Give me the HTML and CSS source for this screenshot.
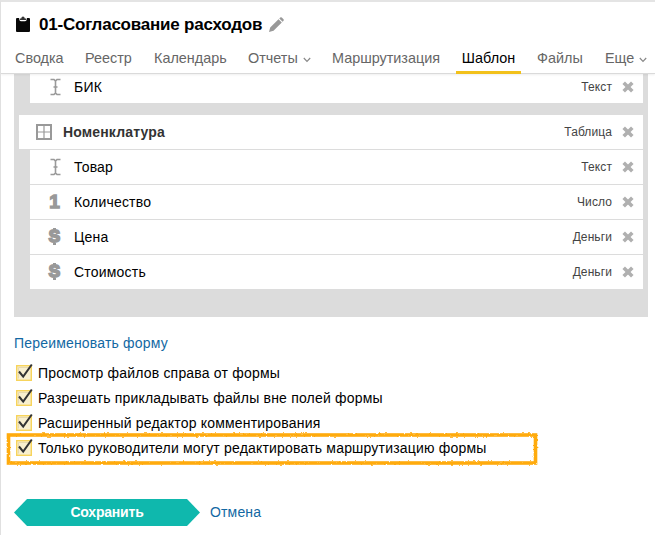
FILE: index.html
```html
<!DOCTYPE html>
<html lang="ru">
<head>
<meta charset="utf-8">
<title>01-Согласование расходов</title>
<link rel="stylesheet" href="styles.css">
</head>
<body>
<svg class="defs" width="0" height="0">
  <symbol id="cursor" viewBox="0 0 11 18"><path d="M.5 1.500H4L5.500 3 7 1.500h3.500M.5 16.500H4L5.500 15 7 16.500h3.500M5.500 3v12M3.500 9h4" fill="none" stroke="#999" stroke-width="1.600"/></symbol>
  <symbol id="cross" viewBox="0 0 12 12"><path d="M1.700 1.700l8.600 8.600M10.300 1.700l-8.600 8.600" fill="none" stroke="#b0b0b0" stroke-width="3.600"/></symbol>
  <symbol id="check" viewBox="0 0 18 18"><rect x=".7" y="2.700" width="14.600" height="14.600" fill="#f8efcf" stroke="#f7d45c" stroke-width="1.400"/><path d="M2.500 15.500v-11h11" fill="none" stroke="#e6d9b0"/><path d="M3 8.500l4.200 5.200L15.800 1.500" fill="none" stroke="#333" stroke-width="2"/></symbol>
  <symbol id="chevron" viewBox="0 0 8 6"><path d="M.8 1L4 4.300 7.200 1" fill="none" stroke="#888" stroke-width="1.200"/></symbol>
</svg>
<div class="page">
  <header class="header">
    <div class="title-row">
      <svg class="clipboard" viewBox="0 0 14 16"><path d="M1 2h2q.2 3.200 2 3.200h4q1.800 0 2-3.200h2q1 0 1 1v12q0 1-1 1H1q-1 0-1-1V3q0-1 1-1z" fill="#080808"/><path d="M3.700 4V2.500h1.500Q5.500.5 7 .5t1.800 2h1.500V4z" fill="#333"/></svg>
      <h1 class="title">01-Согласование расходов</h1>
      <svg class="pencil" viewBox="0 0 15 15"><path d="M0 15l1.200-4.500L9.500 2.200l3.300 3.300-8.300 8.300zM10.300 1.400L11.200.5q.8-.7 1.600 0l1.700 1.700q.8.800 0 1.600l-.9.900z" fill="#999"/></svg>
    </div>
    <nav class="nav">
      <a class="tab t1">Сводка</a><a class="tab t2">Реестр</a><a class="tab t3">Календарь</a><a class="tab t4">Отчеты<svg class="chev"><use href="#chevron"/></svg></a><a class="tab t5">Маршрутизация</a><a class="tab t6 active">Шаблон</a><a class="tab t7">Файлы</a><a class="tab t8">Еще<svg class="chev"><use href="#chevron"/></svg></a>
    </nav>
  </header>
  <main class="main">
    <section class="panel">
      <div class="row cut"><svg class="ic-cursor"><use href="#cursor"/></svg><span class="name">БИК</span><span class="type">Текст</span><svg class="cross"><use href="#cross"/></svg></div>
      <div class="row table"><svg class="ic-table" viewBox="0 0 16 16"><path d="M1 1h14v14H1z" fill="none" stroke="#999" stroke-width="2"/><path d="M8 1v14M1 8h14" stroke="#999" stroke-width="1.200"/></svg><span class="name">Номенклатура</span><span class="type">Таблица</span><svg class="cross"><use href="#cross"/></svg></div>
      <div class="row"><svg class="ic-cursor"><use href="#cursor"/></svg><span class="name">Товар</span><span class="type">Текст</span><svg class="cross"><use href="#cross"/></svg></div>
      <div class="row"><span class="glyph">1</span><span class="name">Количество</span><span class="type">Число</span><svg class="cross"><use href="#cross"/></svg></div>
      <div class="row"><span class="glyph money">S</span><span class="name">Цена</span><span class="type">Деньги</span><svg class="cross"><use href="#cross"/></svg></div>
      <div class="row last"><span class="glyph money">S</span><span class="name">Стоимость</span><span class="type">Деньги</span><svg class="cross"><use href="#cross"/></svg></div>
    </section>
    <a class="rename">Переименовать форму</a>
    <div class="options">
      <label class="option"><svg class="check"><use href="#check"/></svg><span>Просмотр файлов справа от формы</span></label>
      <label class="option"><svg class="check"><use href="#check"/></svg><span>Разрешать прикладывать файлы вне полей формы</span></label>
      <label class="option"><svg class="check"><use href="#check"/></svg><span>Расширенный редактор комментирования</span></label>
      <label class="option"><svg class="check"><use href="#check"/></svg><span>Только руководители могут редактировать маршрутизацию формы</span>
        <svg class="marker" viewBox="0 0 532 34"><filter id="rough" x="-5%" y="-20%" width="110%" height="140%"><feTurbulence type="fractalNoise" baseFrequency=".4" numOctaves="2" seed="4"/><feDisplacementMap in="SourceGraphic" scale="2.500" xChannelSelector="R" yChannelSelector="G"/></filter><rect x="2.500" y="3" width="527" height="28" fill="none" stroke="#ffab0a" stroke-width="3.600" filter="url(#rough)"/></svg>
      </label>
    </div>
    <div class="actions"><button class="save">Сохранить</button><a class="cancel">Отмена</a></div>
  </main>
</div>
</body>
</html>
```
FILE: styles.css
```css
* { box-sizing: border-box; }
body { margin: 0; background: #fff; font: 14px/20px "Liberation Sans", Arial, sans-serif; color: #000; }
svg { display: block; flex: none; overflow: visible; }
.defs { position: absolute; }
.page { height: 535px; border-top: 2px solid #e4e4e4; border-left: 1px solid #e0e0e0; overflow: hidden; }
.header { height: 72px; border-bottom: 1px solid #dadada; box-shadow: 0 1px 2px #0001; position: relative; }
.title-row { display: flex; align-items: center; height: 44px; padding-left: 15px; }
.clipboard { width: 14px; height: 16px; }
.title { width: 222px; margin: 2px 8px 0 9px; font-size: 17px; line-height: 22px; letter-spacing: -.22px; white-space: nowrap; }
.pencil { width: 15px; height: 15px; }
.nav { display: flex; height: 28px; padding-left: 14px; font-size: 14.400px; line-height: 24px; color: #666; }
.tab { display: flex; align-items: center; height: 28px; padding-bottom: 4px; white-space: nowrap; }
.t1 { width: 70px; }
.t2 { width: 69px; }
.t3 { width: 94px; }
.t4 { width: 84px; }
.t5 { width: 124px; }
.t6 { width: 65px; justify-content: center; }
.t7 { width: 68px; padding-left: 16px; }
.t7 + .tab { padding-left: 16px; }
.active { color: #000; border-bottom: 3px solid #f2c11b; padding-bottom: 1px; }
.chev { width: 8px; height: 6px; margin: 3px 0 0 5px; }
.main { padding-left: 13px; }
.panel { width: 634px; height: 243px; padding: 0 5px; background: #dcdcdc; }
.row { display: flex; align-items: center; height: 35px; margin-left: 11px; padding: 0 9px 0 15px; background: #fff; border-bottom: 1px solid #dcdcdc; }
.cut { height: 29px; padding-bottom: 3px; border: 0; margin-bottom: 12px; }
.table { margin-left: 0; padding-left: 17px; }
.last { height: 34px; border: 0; }
.ic-cursor { width: 11px; height: 18px; margin: 0 13px 0 5px; }
.ic-table { width: 16px; height: 16px; }
.glyph { width: 19px; margin-right: 10px; text-align: center; font: 900 19px/20px "Liberation Sans", Arial, sans-serif; color: #999; -webkit-text-stroke: 1.4px #999; }
.money { position: relative; font-size: 17px; -webkit-text-stroke-width: 1.9px; }
/* tips of the dollar sign's vertical bar */
.money::before { content: ""; position: absolute; left: 8px; top: 1px; width: 3px; height: 13px; border: solid #999; border-width: 2px 0; }
.name { margin-right: auto; letter-spacing: .2px; white-space: nowrap; }
.table .name { margin-left: 11px; font-weight: bold; letter-spacing: .15px; color: #333; }
.type { font-size: 12px; letter-spacing: .1px; color: #444; margin-right: 10px; }
.cross { width: 12px; height: 12px; margin-top: -1px; }
.rename { display: block; width: 155px; margin-top: 16px; letter-spacing: .18px; color: #1268a3; white-space: nowrap; }
.options { padding-top: 7px; letter-spacing: .19px; }
.option { display: flex; align-items: center; height: 25px; position: relative; padding-left: 2px; white-space: nowrap; }
.check { width: 18px; height: 18px; margin: -2px 4px 0 0; }
.marker { position: absolute; left: -8px; top: -3px; width: 532px; height: 34px; }
.actions { display: flex; align-items: center; margin-top: 39px; }
.save { width: 186px; height: 27px; border: 0; padding: 0 0 2px; background: #0fb8ad; clip-path: polygon(13px 0, 173px 0, 100% 50%, 173px 100%, 13px 100%, 0 50%); color: #fff; font: bold 14px/20px "Liberation Sans", Arial, sans-serif; letter-spacing: -.2px; }
.cancel { margin: -2px 0 0 10px; letter-spacing: .15px; color: #1268a3; }
```
